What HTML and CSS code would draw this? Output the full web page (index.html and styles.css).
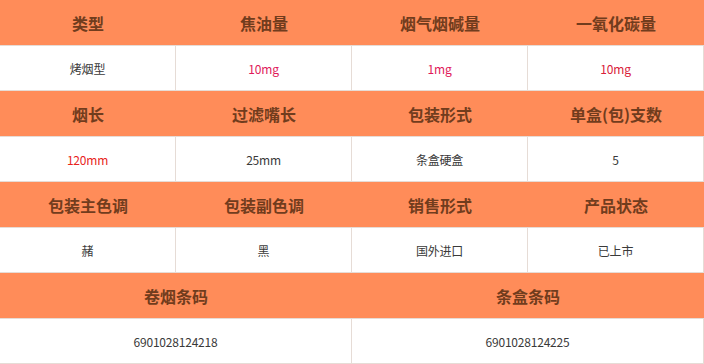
FILE: index.html
```html
<!DOCTYPE html>
<html lang="zh">
<head>
<meta charset="utf-8">
<title>卷烟参数</title>
<link rel="stylesheet" href="styles.css">
</head>
<body>
<div class="spec">
  <div class="row head cols4">
    <div class="cell">类型</div><div class="cell">焦油量</div><div class="cell">烟气烟碱量</div><div class="cell">一氧化碳量</div>
  </div>
  <div class="row data cols4">
    <div class="cell">烤烟型</div><div class="cell pink">10mg</div><div class="cell pink">1mg</div><div class="cell red2">10mg</div>
  </div>
  <div class="row head cols4">
    <div class="cell">烟长</div><div class="cell">过滤嘴长</div><div class="cell">包装形式</div><div class="cell">单盒(包)支数</div>
  </div>
  <div class="row data cols4">
    <div class="cell red">120mm</div><div class="cell">25mm</div><div class="cell">条盒硬盒</div><div class="cell">5</div>
  </div>
  <div class="row head cols4">
    <div class="cell">包装主色调</div><div class="cell">包装副色调</div><div class="cell">销售形式</div><div class="cell">产品状态</div>
  </div>
  <div class="row data cols4">
    <div class="cell">赭</div><div class="cell">黑</div><div class="cell">国外进口</div><div class="cell">已上市</div>
  </div>
  <div class="row head cols2">
    <div class="cell">卷烟条码</div><div class="cell">条盒条码</div>
  </div>
  <div class="row data cols2">
    <div class="cell">6901028124218</div><div class="cell">6901028124225</div>
  </div>
</div>
</body>
</html>
```
FILE: styles.css
```css
html, body {
  margin: 0;
  padding: 0;
  background: #ffffff;
}
body {
  font-family: "Noto Sans CJK SC", "Noto Sans", sans-serif;
}
.spec {
  width: 704px;
}
.row {
  display: grid;
  box-sizing: border-box;
  border-bottom: 1px solid #e6dcd6;
}
.cols4 { grid-template-columns: repeat(4, 1fr); }
.cols2 { grid-template-columns: repeat(2, 1fr); }
.cell {
  display: flex;
  align-items: center;
  justify-content: center;
  box-sizing: border-box;
  white-space: nowrap;
}
.head {
  height: 46px;
  background: #ff8c59;
}
.head .cell {
  font-size: 16px;
  font-weight: bold;
  color: #713c1d;
  padding-top: 1px;
}
.data {
  height: 45px;
  background: #ffffff;
}
.data .cell {
  font-size: 12px;
  color: #3a3a3a;
  border-right: 1px solid #e6dcd6;
  letter-spacing: -0.2px;
}
.pink { color: #e0195a !important; }
.red { color: #e8231c !important; }
.red2 { color: #d9203a !important; }
```
